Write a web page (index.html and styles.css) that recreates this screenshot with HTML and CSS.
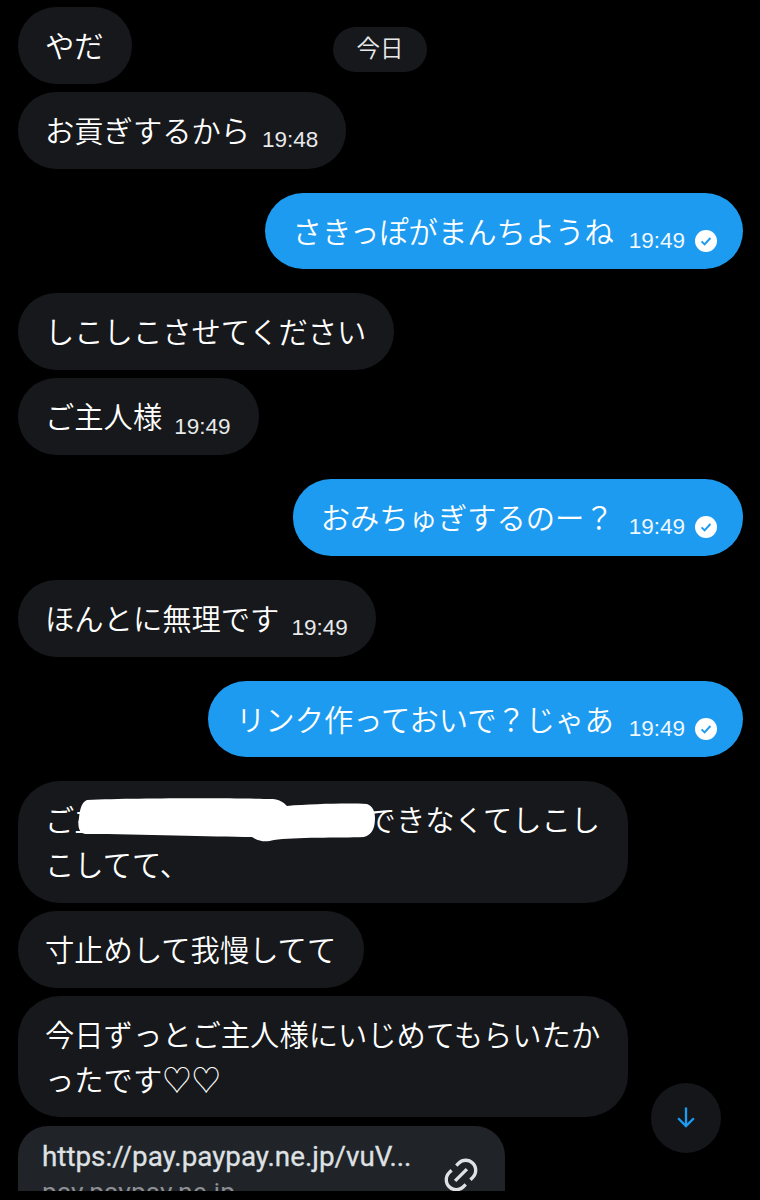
FILE: index.html
```html
<!DOCTYPE html>
<html lang="ja">
<head>
    <meta charset="utf-8" />
    <title>メッセージ</title>
    <link rel="stylesheet" href="styles.css">
</head>
<body>
    <div class="chat">
        <div class="group">
            <div class="bubble"><span class="text">やだ</span></div>
            <div class="bubble"><span class="text">お貢ぎするから</span><span class="time">19:48</span></div>
        </div>

        <div class="group sent">
            <div class="bubble"><span class="text">さきっぽがまんちようね</span><span class="time">19:49</span>
                <svg class="check" viewBox="0 0 22 22"><circle cx="11" cy="11" r="11" fill="#fff"/><path d="M6.6 11.4l3 3 5.8-6.4" fill="none" stroke="#1d9bf0" stroke-width="2"/></svg>
            </div>
        </div>

        <div class="group">
            <div class="bubble"><span class="text">しこしこさせてください</span></div>
            <div class="bubble"><span class="text">ご主人様</span><span class="time">19:49</span></div>
        </div>

        <div class="group sent">
            <div class="bubble"><span class="text">おみちゅぎするのー？</span><span class="time">19:49</span>
                <svg class="check" viewBox="0 0 22 22"><circle cx="11" cy="11" r="11" fill="#fff"/><path d="M6.6 11.4l3 3 5.8-6.4" fill="none" stroke="#1d9bf0" stroke-width="2"/></svg>
            </div>
        </div>

        <div class="group">
            <div class="bubble"><span class="text">ほんとに無理です</span><span class="time">19:49</span></div>
        </div>

        <div class="group sent">
            <div class="bubble"><span class="text">リンク作っておいで？じゃあ</span><span class="time">19:49</span>
                <svg class="check" viewBox="0 0 22 22"><circle cx="11" cy="11" r="11" fill="#fff"/><path d="M6.6 11.4l3 3 5.8-6.4" fill="none" stroke="#1d9bf0" stroke-width="2"/></svg>
            </div>
        </div>

        <div class="group">
            <div class="bubble wide"><span class="text">ご主<svg class="scribble" viewBox="0 0 298 44"><path d="M10 2C60 0 150 0 196 1c9 1 12 5 14 7 25-2 60-3 80-2 6 2 8 8 8 14 0 10-3 17-11 19-25 1-70 0-90 3-8 2-14 2-22-3-40 0-110-3-166-3C3 36 0 30 2 20 3 10 5 4 10 2z" fill="#fff"/></svg>できなくてしこし<br>こしてて、</span></div>
            <div class="bubble"><span class="text">寸止めして我慢してて</span></div>
            <div class="bubble wide"><span class="text">今日ずっとご主人様にいじめてもらいたかったです♡♡</span></div>
            <div class="link-card">
                <div class="link-info">
                    <div class="link-url">https://pay.paypay.ne.jp/vuV...</div>
                    <div class="link-host">pay.paypay.ne.jp</div>
                </div>
                <svg class="link-icon" viewBox="0 0 24 24"><path d="M18.36 5.64c-1.95-1.96-5.11-1.96-7.07 0L9.88 7.05 8.46 5.64l1.42-1.42c2.73-2.73 7.16-2.73 9.9 0 2.73 2.74 2.73 7.17 0 9.9l-1.42 1.42-1.41-1.42 1.41-1.41c1.96-1.96 1.96-5.12 0-7.07zm-2.12 3.53l-7.07 7.07-1.41-1.41 7.07-7.07 1.41 1.41zm-12.02.71l1.42-1.42 1.41 1.42-1.41 1.41c-1.96 1.96-1.96 5.12 0 7.07 1.95 1.96 5.11 1.96 7.07 0l1.41-1.41 1.42 1.41-1.42 1.42c-2.73 2.73-7.16 2.73-9.9 0-2.73-2.74-2.73-7.17 0-9.9z"/></svg>
            </div>
        </div>

        <div class="date-pill">今日</div>
        <div class="scroll-btn">
            <svg viewBox="0 0 24 24"><path d="M13 3v13.59l5.043-5.05 1.414 1.42L12 20.41l-7.457-7.45 1.414-1.42L11 16.59V3h2z"/></svg>
        </div>
    </div>
</body>
</html>
```

FILE: styles.css
```css
html, body {
    margin: 0;
    padding: 0;
    background-color: #000;
}

body {
    height: 1200px;
    overflow: hidden;
    font-family: "Noto Sans CJK JP", "Liberation Sans", sans-serif;
    color: #fff;
}

.chat {
    position: relative;
    box-sizing: border-box;
    height: 1191px;
    padding: 7px 17px 0 18px;
    overflow: hidden;
    display: flex;
    flex-direction: column;
    gap: 24px;
}

.group {
    display: flex;
    flex-direction: column;
    align-items: flex-start;
    gap: 8px;
}

.group.sent {
    align-items: flex-end;
}

.bubble {
    display: flex;
    align-items: center;
    box-sizing: border-box;
    padding: 15px 28px 17px 27px;
    border-radius: 38px;
    background-color: #16181b;
}

.sent .bubble {
    background-color: #1d9bf0;
    padding-right: 26px;
    padding-left: 28px;
}

.bubble.wide {
    width: 610px;
    padding-right: 24px;
    border-radius: 42px;
}

.text {
    font-size: 29.3px;
    font-weight: 350;
    line-height: 44.8px;
    white-space: nowrap;
}

.bubble.wide .text {
    white-space: normal;
}

.time {
    margin: 22px 0 0 12px;
    font-family: "Liberation Sans", sans-serif;
    font-size: 22.5px;
    line-height: 20px;
    color: #e7e9ea;
}

.sent .time {
    margin-left: 15px;
    color: #f0f8fe;
}

.check {
    width: 22px;
    height: 22px;
    margin: 22px 0 0 10px;
}

.scribble {
    position: relative;
    display: inline-block;
    width: 298px;
    height: 44px;
    margin: -12px -8px -12px -27px;
    vertical-align: 1px;
}

.link-card {
    display: flex;
    justify-content: space-between;
    box-sizing: border-box;
    width: 487px;
    height: 110px;
    margin-top: 1px;
    padding: 13px 26px 0 24px;
    border-radius: 30px;
    background-color: #202327;
}

.link-url {
    font-family: "Roboto", "Liberation Sans", sans-serif;
    font-size: 27.8px;
    line-height: 36px;
    -webkit-text-stroke: 0.3px #dfe1e4;
    color: #dfe1e4;
}

.link-host {
    font-family: "Roboto", "Liberation Sans", sans-serif;
    font-size: 26.5px;
    line-height: 34px;
    color: #8b8f94;
}

.link-icon {
    width: 40px;
    height: 40px;
    margin: 16px -2px 0 0;
    fill: #dfe1e4;
}

.date-pill {
    position: absolute;
    left: 333px;
    top: 27px;
    width: 94px;
    height: 45px;
    border-radius: 23px;
    background-color: #16181b;
    font-size: 23.5px;
    font-weight: 350;
    line-height: 41px;
    text-align: center;
    color: #e7e9ea;
}

.scroll-btn {
    position: absolute;
    left: 651px;
    top: 1083px;
    display: flex;
    align-items: center;
    justify-content: center;
    width: 70px;
    height: 70px;
    border-radius: 50%;
    background-color: #141619;
}

.scroll-btn svg {
    width: 28px;
    height: 28px;
    fill: #1d9bf0;
}
```
